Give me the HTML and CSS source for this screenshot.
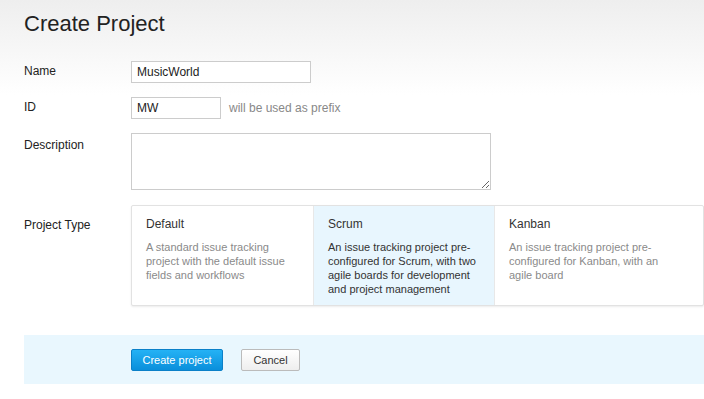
FILE: index.html
```html
<!doctype html>
<html lang="en">
  <head>
    <meta charset="UTF-8" />
    <meta name="viewport" content="width=device-width, initial-scale=1.0" />
    <title>Create Project</title>
    <link rel="stylesheet" href="styles.css">
  </head>
  <body>
    <div class="page">
      <h1>Create Project</h1>

      <form class="form">
        <div class="row">
          <label class="label" for="name">Name</label>
          <input id="name" class="input input-name" type="text" value="MusicWorld" />
        </div>

        <div class="row">
          <label class="label" for="pid">ID</label>
          <div class="inline">
            <input id="pid" class="input input-id" type="text" value="MW" />
            <span class="hint">will be used as prefix</span>
          </div>
        </div>

        <div class="row">
          <label class="label label-desc" for="desc">Description</label>
          <textarea id="desc" class="input textarea"></textarea>
        </div>

        <div class="row row-type">
          <span class="label">Project Type</span>
          <div class="types">
            <div class="type">
              <div class="type-title">Default</div>
              <div class="type-desc">A standard issue tracking project with the default issue fields and workflows</div>
            </div>
            <div class="type selected">
              <div class="type-title">Scrum</div>
              <div class="type-desc">An issue tracking project pre-configured for Scrum, with two agile boards for development and project management</div>
            </div>
            <div class="type">
              <div class="type-title">Kanban</div>
              <div class="type-desc">An issue tracking project pre-configured for Kanban, with an agile board</div>
            </div>
          </div>
        </div>
      </form>

      <div class="actions">
        <button class="btn btn-primary" type="button">Create project</button>
        <button class="btn btn-cancel" type="button">Cancel</button>
      </div>
    </div>
  </body>
</html>
```

FILE: styles.css
```css
* {
  margin: 0;
  padding: 0;
  box-sizing: border-box;
}

html,
body {
  height: 100%;
}

body {
  font-family: 'Liberation Sans', Arial, sans-serif;
  color: #222;
  background: linear-gradient(180deg, #eeeeee 0px, #ffffff 95px) no-repeat;
  background-color: #fff;
}

.page {
  padding: 11px 0 0 24px;
}

h1 {
  font-size: 22px;
  font-weight: normal;
  color: #222;
  line-height: 26px;
  margin-bottom: 24px;
}

.form {
  display: flex;
  flex-direction: column;
  gap: 14px;
}

.row {
  display: grid;
  grid-template-columns: 107px auto;
  align-items: start;
}

.label {
  font-size: 12px;
  line-height: 20px;
  color: #222;
}

.label-desc {
  padding-top: 2px;
}

.row-type .label {
  padding-top: 10px;
}

.inline {
  display: flex;
  align-items: center;
  gap: 8px;
}

.input {
  font-family: 'Liberation Sans', Arial, sans-serif;
  font-size: 12px;
  color: #222;
  border: 1px solid #cccccc;
  background: #fff;
  height: 22px;
  padding: 0 5px;
  outline: none;
}

.input-name {
  width: 180px;
}

.input-id {
  width: 90px;
}

.hint {
  font-size: 12px;
  color: #888;
}

.textarea {
  width: 360px;
  height: 57px;
  resize: both;
}

.row-type {
  margin-top: 1px;
}

.types {
  display: grid;
  grid-template-columns: 181px 181px 182px;
  border: 1px solid #e2e2e2;
  border-radius: 2px;
  box-shadow: 0 1px 2px rgba(0, 0, 0, 0.08);
  background: #fff;
  height: 101px;
}

.type {
  padding: 10px 12px 0 14px;
}

.type + .type {
  border-left: 1px solid #e8e8e8;
}

.type.selected {
  background: #e8f6fe;
}

.type-title {
  font-size: 12px;
  color: #333;
  line-height: 16px;
  margin-bottom: 8px;
}

.type-desc {
  font-size: 11px;
  line-height: 14px;
  color: #8a8a8a;
}

.selected .type-desc {
  color: #333;
}

.actions {
  margin-top: 29px;
  background: #e9f7fe;
  height: 49px;
  padding: 14px 0 0 107px;
  display: flex;
  gap: 18px;
  align-items: flex-start;
}

.btn {
  font-family: 'Liberation Sans', Arial, sans-serif;
  font-size: 11px;
  height: 22px;
  border-radius: 2px;
  cursor: pointer;
}

.btn-primary {
  width: 92px;
  color: #fff;
  background: linear-gradient(180deg, #24b2f5 0%, #0a8fdb 100%);
  border: 1px solid #0b80c8;
}

.btn-cancel {
  width: 59px;
  color: #333;
  background: linear-gradient(180deg, #ffffff 0%, #eeeeee 100%);
  border: 1px solid #bbbbbb;
}
```
